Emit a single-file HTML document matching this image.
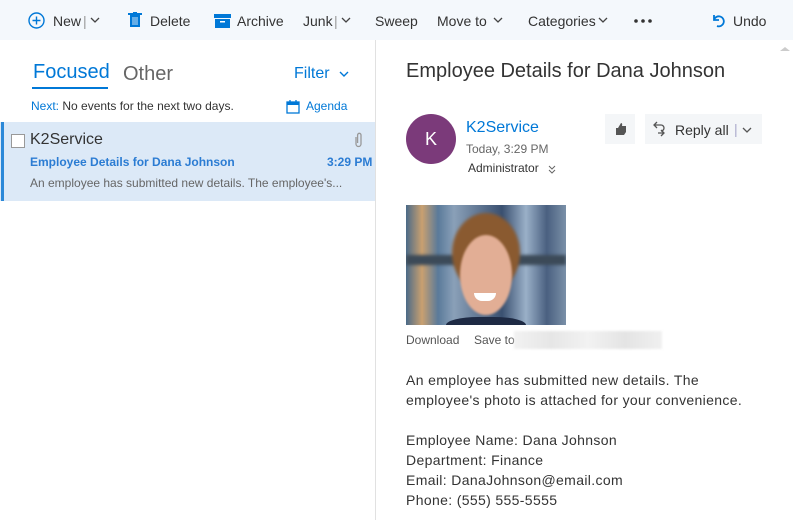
<!DOCTYPE html>
<html><head><style>
*{margin:0;padding:0;box-sizing:border-box}
body{width:793px;height:520px;overflow:hidden;background:#fff;font-family:"Segoe UI","Liberation Sans",sans-serif;position:relative;color:#333}
.a{position:absolute;white-space:nowrap}
.tb{position:absolute;left:0;top:0;width:793px;height:40px;background:#f4f8fc}
.t{font-size:14px;color:#333;top:13px}
</style></head><body>
<div class="tb"></div>
<svg class="a" style="left:28px;top:12px" width="17" height="17"><circle cx="8.5" cy="8.5" r="7.5" fill="none" stroke="#0078d7" stroke-width="1.4"/><path d="M8.5 4.5v8M4.5 8.5h8" stroke="#0078d7" stroke-width="1.4"/></svg>
<div class="a t" style="left:53px">New</div><div class="a t" style="left:83px;color:#999">|</div>
<svg class="a" style="left:90px;top:17px" width="10" height="8"><path d="M1 1l4 4 4-4" fill="none" stroke="#444" stroke-width="1.3"/></svg>
<svg class="a" style="left:128px;top:12px" width="14" height="16"><rect x="2" y="3" width="10" height="12" fill="#0078d7"/><rect x="0" y="1" width="14" height="2" fill="#0078d7"/><rect x="5" y="0" width="4" height="2" fill="#0078d7"/><path d="M5 5v8M7 5v8M9 5v8" stroke="#fff" stroke-width="0.8"/></svg>
<div class="a t" style="left:150px">Delete</div>
<svg class="a" style="left:214px;top:14px" width="17" height="14"><rect x="0" y="0" width="17" height="4" fill="#0078d7"/><rect x="1" y="5" width="15" height="9" fill="#0078d7"/><rect x="6" y="7" width="5" height="1.5" fill="#fff"/></svg>
<div class="a t" style="left:237px">Archive</div>
<div class="a t" style="left:303px">Junk</div><div class="a t" style="left:334px;color:#999">|</div>
<svg class="a" style="left:341px;top:17px" width="10" height="8"><path d="M1 1l4 4 4-4" fill="none" stroke="#444" stroke-width="1.3"/></svg>
<div class="a t" style="left:375px">Sweep</div>
<div class="a t" style="left:437px">Move to</div>
<svg class="a" style="left:493px;top:17px" width="10" height="8"><path d="M1 1l4 4 4-4" fill="none" stroke="#444" stroke-width="1.3"/></svg>
<div class="a t" style="left:528px">Categories</div>
<svg class="a" style="left:598px;top:17px" width="10" height="8"><path d="M1 1l4 4 4-4" fill="none" stroke="#444" stroke-width="1.3"/></svg>
<svg class="a" style="left:634px;top:19px" width="18" height="4"><circle cx="2" cy="2" r="1.8" fill="#333"/><circle cx="9" cy="2" r="1.8" fill="#333"/><circle cx="16" cy="2" r="1.8" fill="#333"/></svg>
<svg class="a" style="left:711px;top:13px" width="14" height="15"><path d="M3 2v5h5M3 7a5 5 0 1 1 3 6" fill="none" stroke="#0078d7" stroke-width="1.8"/></svg>
<div class="a t" style="left:733px">Undo</div>

<div class="a" style="left:375px;top:40px;width:1px;height:480px;background:#e1e1e1"></div>
<div class="a" style="left:33px;top:61px;font-size:20px;color:#0078d7">Focused</div>
<div class="a" style="left:32px;top:87px;width:76px;height:2px;background:#0078d7"></div>
<div class="a" style="left:123px;top:63px;font-size:20px;color:#666">Other</div>
<div class="a" style="left:294px;top:65px;font-size:16px;color:#0078d7">Filter</div>
<svg class="a" style="left:339px;top:71px" width="10" height="8"><path d="M1 1l4 4 4-4" fill="none" stroke="#0078d7" stroke-width="1.4"/></svg>
<div class="a" style="left:31px;top:99px;font-size:12px;color:#333"><span style="color:#0078d7">Next:</span> No events for the next two days.</div>
<svg class="a" style="left:286px;top:99px" width="14" height="15"><rect x="1" y="3" width="12" height="11" fill="none" stroke="#0078d7" stroke-width="1.3"/><rect x="1" y="3" width="12" height="3" fill="#0078d7"/><path d="M4 1v3M10 1v3" stroke="#0078d7" stroke-width="1.3"/></svg>
<div class="a" style="left:306px;top:99px;font-size:12px;color:#0078d7">Agenda</div>

<div class="a" style="left:0;top:122px;width:375px;height:79px;background:#dce9f7"></div>
<div class="a" style="left:1px;top:122px;width:3px;height:79px;background:#2b88d8"></div>
<div class="a" style="left:11px;top:134px;width:14px;height:14px;border:1px solid #999;background:#fff"></div>
<div class="a" style="left:30px;top:131px;font-size:16px;color:#333">K2Service</div>
<svg class="a" style="left:354px;top:132px" width="9" height="16"><path d="M2 5v7a2.5 2.5 0 0 0 5 0V3a1.7 1.7 0 0 0-3.4 0v8" fill="none" stroke="#999" stroke-width="1.3"/></svg>
<div class="a" style="left:30px;top:155px;font-size:12px;font-weight:bold;color:#2b7cd3">Employee Details for Dana Johnson</div>
<div class="a" style="left:327px;top:155px;font-size:12px;font-weight:bold;color:#2b7cd3">3:29 PM</div>
<div class="a" style="left:30px;top:176px;font-size:12px;color:#666">An employee has submitted new details. The employee's...</div>

<svg class="a" style="left:780px;top:46px" width="10" height="6"><path d="M0 5l5-4 5 4z" fill="#ccc"/></svg>
<div class="a" style="left:406px;top:60px;font-size:20px;color:#333">Employee Details for Dana Johnson</div>
<div class="a" style="left:406px;top:114px;width:50px;height:50px;border-radius:50%;background:#7b3a7a;color:#fff;font-size:18px;text-align:center;line-height:50px">K</div>
<div class="a" style="left:466px;top:119px;font-size:16px;color:#0078d7">K2Service</div>
<div class="a" style="left:466px;top:142px;font-size:12px;color:#666">Today, 3:29 PM</div>
<div class="a" style="left:468px;top:161px;font-size:12px;color:#333">Administrator</div>
<svg class="a" style="left:548px;top:165px" width="8" height="9"><path d="M1 1l3 3 3-3M1 5l3 3 3-3" fill="none" stroke="#666" stroke-width="1"/></svg>
<div class="a" style="left:605px;top:114px;width:30px;height:30px;background:#f4f6f8"></div>
<svg class="a" style="left:613px;top:122px" width="14" height="14"><path d="M3 6h2l3-5c1 0 1.5 1 1 3h4v6l-2 3H3z" fill="#555"/></svg>
<div class="a" style="left:645px;top:114px;width:117px;height:30px;background:#f4f6f8"></div>
<svg class="a" style="left:652px;top:120px" width="14" height="18"><path d="M5 2L2 5l3 3M2 5h7a3 3 0 0 1 0 6M9 16l3-3-3-3M12 13H6" fill="none" stroke="#555" stroke-width="1.3"/></svg>
<div class="a" style="left:675px;top:122px;font-size:14px;color:#333">Reply all</div>
<div class="a" style="left:734px;top:121px;font-size:14px;color:#aac">|</div>
<svg class="a" style="left:742px;top:127px" width="10" height="8"><path d="M1 1l4 4 4-4" fill="none" stroke="#555" stroke-width="1.3"/></svg>

<div class="a" style="left:406px;top:205px;width:160px;height:120px;overflow:hidden;background:linear-gradient(90deg,#4a6a88 0,#c9a070 10%,#5a7a9a 20%,#8aa0b8 30%,#3a5070 60%,#9ab0c8 75%,#4a6080 88%,#7a90a8 100%)">
<div style="position:absolute;left:0;top:50px;width:160px;height:10px;background:#3c4a58;filter:blur(1.5px)"></div>
<div style="position:absolute;left:46px;top:8px;width:68px;height:80px;border-radius:50%;background:#8a5a30;filter:blur(1.5px)"></div>
<div style="position:absolute;left:54px;top:30px;width:52px;height:80px;border-radius:50%;background:#e2ae95;filter:blur(1px)"></div>
<div style="position:absolute;left:68px;top:88px;width:22px;height:8px;border-radius:0 0 11px 11px;background:#fff"></div>
<div style="position:absolute;left:40px;top:112px;width:80px;height:20px;border-radius:40% 40% 0 0;background:#1e2a44"></div>
</div>
<div class="a" style="left:406px;top:333px;font-size:12px;color:#555">Download</div>
<div class="a" style="left:474px;top:333px;font-size:12px;color:#555">Save to</div>
<div class="a" style="left:514px;top:331px;width:148px;height:18px;background:linear-gradient(90deg,#f2f2f2,#e6e6e6,#f2f2f2,#e4e4e4,#f0f0f0);filter:blur(1px)"></div>
<div class="a" style="left:406px;top:370px;font-size:14px;line-height:20px;color:#333;letter-spacing:0.35px">An employee has submitted new details. The<br>employee's photo is attached for your convenience.<br><br>Employee Name: Dana Johnson<br>Department: Finance<br>Email: DanaJohnson@email.com<br>Phone: (555) 555-5555</div>
</body></html>
